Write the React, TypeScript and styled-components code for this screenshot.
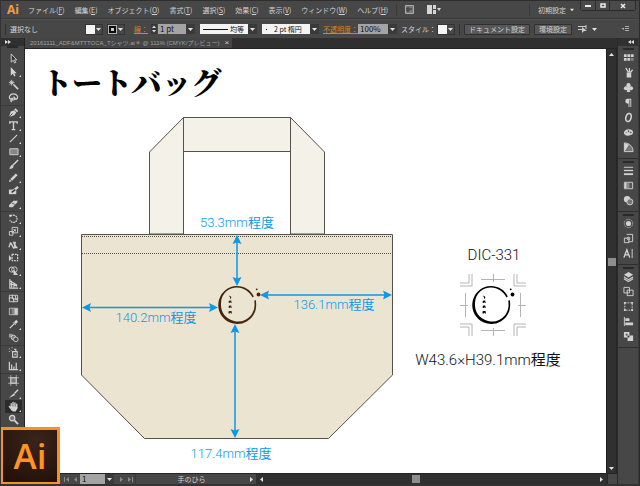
import React from "react";
import styled, { createGlobalStyle } from "styled-components";

const UI = '"Noto Sans CJK JP", "Liberation Sans", sans-serif';
const LATIN = '"Liberation Sans", "Noto Sans CJK JP", sans-serif';
const ORANGE = "#d9822b";

const Global = createGlobalStyle`
  * { box-sizing: border-box; }
  body { margin: 0; background: #474747; }
  button, input, select { font: inherit; color: inherit; margin: 0; padding: 0; border: 0; border-radius: 0; background: none; }
  svg { display: block; flex: none; }
`;

const Window = styled.div`
  height: 100vh;
  display: flex;
  flex-direction: column;
  background: #474747;
  color: #d2d2d2;
  font: 7px/10px ${UI};
  border-left: 1px solid #333;
  border-right: 1px solid #2c2c2c;
  border-bottom: 2px solid #333;
  overflow: hidden;
  position: relative;
`;

/* menu bar */
const MenuBar = styled.header`
  height: 19px;
  flex: none;
  display: flex;
  align-items: center;
  padding-left: 6px;
  border-top: 1px solid #2e2e2e;
  border-bottom: 1px solid #3a3a3a;
`;
const Brand = styled.span`
  width: 21px;
  font: bold 12px/14px "Open Sans", sans-serif;
  color: #f2a03a;
`;
const Menus = styled.nav`
  display: flex;
  gap: 10px;
`;
const MenuItem = styled.button`
  white-space: nowrap;
  u { text-underline-offset: 1px; }
`;
const Divider = styled.span`
  width: 1px;
  height: 12px;
  background: #383838;
  margin: 0 8px;
`;
const IconGap = styled.button`
  display: flex;
  margin-right: 13px;
`;
const MenuRight = styled.div`
  margin-left: auto;
  height: 100%;
  display: flex;
  align-items: center;
`;
const Workspace = styled.button`
  display: flex;
  align-items: center;
  gap: 4px;
  margin-right: 6px;
`;
const WindowButtons = styled.div`
  align-self: flex-start;
  display: flex;
  margin-right: 3px;
  border: 1px solid #2b2b2b;
  border-top: 0;
  border-radius: 0 0 3px 3px;
`;
const WindowButton = styled.button<{ $wide?: boolean }>`
  width: ${(p) => (p.$wide ? 26 : 14)}px;
  height: 9px;
  display: grid;
  place-items: center;
  background: #4a4a4a;
  & + & { border-left: 1px solid #2b2b2b; }
`;

/* control bar */
const ControlBar = styled.div`
  height: 19px;
  flex: none;
  display: flex;
  align-items: center;
  padding: 0 10px 0 4px;
  white-space: nowrap;
  border-top: 1px solid #515151;
`;
const Grip = styled.span`
  width: 1px;
  height: 11px;
  margin-right: 4px;
  background: #303030;
`;
const Status = styled.span`
  width: 75px;
`;
const Swatch = styled.button<{ $stroke?: boolean }>`
  height: 11px;
  display: flex;
  align-items: center;
  margin-right: 4px;
  border: 1px solid #343434;
  i {
    width: 9px;
    height: 9px;
    background: ${(p) => (p.$stroke ? "#ccc" : "#f6f6f6")};
    border: ${(p) => (p.$stroke ? "3px solid #0c0c0c" : "0")};
    outline: ${(p) => (p.$stroke ? "1px solid #b5b5b5" : "0")};
    outline-offset: -1px;
  }
  svg { margin: 0 1px; }
`;
const LinkLabel = styled.a<{ $before?: number }>`
  color: ${ORANGE};
  text-decoration: underline;
  text-underline-offset: 1px;
  margin-left: ${(p) => p.$before ?? 0}px;
`;
const Stepper = styled.button`
  width: 6px;
  height: 10px;
  margin: 0 1px 0 3px;
  background: #383838;
  display: grid;
  place-items: center;
`;
const Field = styled.input<{ $w: number }>`
  width: ${(p) => p.$w}px;
  height: 10px;
  padding-left: 2px;
  background: #a4a4a4;
  color: #111;
  font: 8px/10px ${UI};
`;
const DropButton = styled.button<{ $gap?: number }>`
  width: 9px;
  height: 10px;
  margin-right: ${(p) => p.$gap ?? 5}px;
  background: #3a3a3a;
  display: grid;
  place-items: center;
`;
const Preset = styled.select<{ $line?: boolean }>`
  appearance: none;
  width: 48px;
  height: 10px;
  padding-left: ${(p) => (p.$line ? 30 : 12)}px;
  color: #111;
  font: 7px/10px ${UI};
  background: ${(p) =>
    p.$line
      ? "linear-gradient(#111, #111) 3px 5px / 25px 1px no-repeat #f3f3f3"
      : "linear-gradient(#111, #111) 4px 5px / 1px 1px no-repeat #f3f3f3"};
`;
const PlainLabel = styled.span`
  margin-right: 1px;
`;
const PushButton = styled.button`
  height: 11px;
  padding: 0 4px;
  margin-right: 4px;
  line-height: 9px;
  background: #575757;
  border: 1px solid #303030;
  border-radius: 1px;
`;
const PanelToggle = styled.button`
  margin-left: auto;
`;
const IconMenu = styled.button`
  display: flex;
  align-items: center;
  gap: 5px;
  margin-left: 2px;
`;

/* main area */
const Main = styled.div`
  flex: 1;
  min-height: 0;
  display: grid;
  grid-template-columns: 24px minmax(0, 1fr) 22px;
`;
const Tools = styled.aside`
  background: #474747;
  border-right: 1px solid #232323;
  display: flex;
  flex-direction: column;
  align-items: stretch;
  overflow: hidden;
`;
const PanelHead = styled.div<{ $right?: boolean }>`
  height: 8px;
  flex: none;
  display: flex;
  align-items: center;
  justify-content: ${(p) => (p.$right ? "flex-end" : "flex-start")};
  padding: 0 4px;
  background: #303030;
`;
const PanelGrip = styled.div`
  width: 11px;
  height: 2px;
  flex: none;
  margin: 0 auto;
  background: #2a2a2a;
`;
const ToolList = styled.div`
  display: flex;
  flex-direction: column;
  padding-top: 4px;
`;
const ToolGroup = styled.div`
  padding: 0 0 1px 4px;
  & + & { border-top: 1px solid #3b3b3b; }
`;
const ToolButton = styled.button<{ $active?: boolean }>`
  width: 17px;
  height: 13px;
  display: flex;
  align-items: center;
  padding-left: 3px;
  background: ${(p) => (p.$active ? "#2b2b2b" : "none")};
`;

const Center = styled.main`
  display: flex;
  flex-direction: column;
  min-width: 0;
  min-height: 0;
`;
const Tabs = styled.div`
  height: 11px;
  flex: none;
  display: flex;
  background: #2f2f2f;
  border-bottom: 1px solid #242424;
`;
const Tab = styled.button`
  display: flex;
  align-items: center;
  gap: 5px;
  padding: 0 3px 0 5px;
  background: #454545;
  color: #a0a0a0;
  font: 6px/10px ${LATIN};
  white-space: nowrap;
`;
const TabClose = styled.span`
  font-size: 8px;
  color: #ccc;
`;
const View = styled.div`
  flex: 1;
  min-height: 0;
  display: flex;
`;
const Artboard = styled.section`
  flex: 1;
  min-width: 0;
  position: relative;
  overflow: hidden;
  background: #fff;
  color: #111;
`;
const Title = styled.h1`
  position: absolute;
  left: 17px;
  top: 13px;
  margin: 0;
  color: #000;
  font: 900 30px/38px "Noto Serif CJK JP", "Noto Sans CJK JP", serif;
  white-space: nowrap;
`;
const Drawing = styled.svg`
  font-family: Roboto, "Noto Sans CJK JP", sans-serif;
  font-weight: 300;
`;
const Unit = styled.tspan`
  font-weight: 400;
`;
const VScroll = styled.div`
  width: 11px;
  flex: none;
  display: flex;
  flex-direction: column;
  align-items: center;
  justify-content: space-between;
  padding: 3px 0 2px;
  background: #303030;
  border-left: 1px solid #1f1f1f;
  border-right: 1px solid #262626;
`;
const Thumb = styled.span`
  width: 8px;
  height: 8px;
  background: #8d8d8d;
`;
const StatusBar = styled.footer`
  height: 11px;
  flex: none;
  display: flex;
  align-items: center;
  padding-left: 37px;
  border-top: 1px solid #242424;
`;
const NavButton = styled.button`
  width: 9px;
  height: 9px;
  display: grid;
  place-items: center;
`;
const ToolName = styled.span`
  flex: 1;
  text-align: center;
  border-left: 1px solid #393939;
`;
const StatusLeft = styled.div`
  width: 194px;
  height: 100%;
  display: flex;
  align-items: center;
`;
const HScroll = styled.div`
  flex: 1;
  height: 100%;
  display: flex;
  align-items: center;
  padding: 0 3px;
  background: #303030;
`;
const HRail = styled.div`
  flex: 1;
  padding-left: 43%;
  display: flex;
`;
const Corner = styled.span`
  width: 10px;
  height: 100%;
  background: #484848;
  border-left: 1px solid #262626;
`;

const Dock = styled.aside`
  background: #474747;
  border-left: 1px solid #2a2a2a;
  border-right: 1px solid #383838;
`;
const DockGroup = styled.div`
  display: flex;
  flex-direction: column;
  align-items: center;
  padding: 2px 0 3px;
  border-bottom: 1px solid #2e2e2e;
`;
const DockButton = styled.button`
  width: 20px;
  height: 15px;
  display: grid;
  place-items: center;
`;

const AppBadge = styled.div`
  position: absolute;
  left: -1px;
  bottom: -1px;
  width: 60px;
  height: 58px;
  display: grid;
  place-items: center;
  border: 3px solid #f7921e;
  background: radial-gradient(circle at 60% 20%, #3a241a, #200f08);
  color: #ff9420;
  font: 600 35px/42px "Open Sans", "Noto Sans", sans-serif;
`;

/* small triangles used by drop-downs and scroll bars */
const arrows = {
  down: "M0 1h5L2.5 4z",
  up: "M0 4h5L2.5 1z",
  left: "M4 0v5L1 2.5z",
  right: "M1 0v5L4 2.5z",
  first: "M5 0v5L2 2.500zM0 0h1v5H0z",
  last: "M0 0v5l3-2.500zM4 0h1v5H4z",
};
const Arrow = ({ dir, fill = "#e4e4e4", size = 5 }: { dir: keyof typeof arrows; fill?: string; size?: number }) => (
  <svg width={size} height={size} viewBox="0 0 5 5" fill={fill} aria-hidden="true">
    <path d={arrows[dir]} />
  </svg>
);

const F = { fill: "currentColor", stroke: "none" };
const Icon = ({ children, size = 11 }: { children: React.ReactNode; size?: number }) => (
  <svg width={size} height={size} viewBox="0 0 12 12" fill="none" stroke="currentColor" strokeWidth="1" aria-hidden="true">
    {children}
  </svg>
);

type Tool = { name: string; art: React.ReactNode; more?: boolean; active?: boolean };
const toolGroups: Tool[][] = [
  [
    { name: "選択ツール", art: <path d="M3.500 1v9l2.200-2 1.500 3 1.300-.7-1.500-2.800h2.500z" fill="#333" /> },
    { name: "ダイレクト選択ツール", more: true, art: <path d="M3 1v9.500l2.300-2 1.500 3 1.500-.8-1.500-2.800h2.700z" {...F} /> },
    { name: "自動選択ツール", art: <><path d="M6 6l5 5" strokeWidth="1.800" /><path d="M4 1v6M1 4h6M2 2l4 4M6 2L2 6" /></> },
    { name: "なげなわツール", art: <><path d="M3 8C0 6 2 2 6 2s6 4 3 6M3 8c1 2 3 0 2-1s-3 2-1 4" strokeWidth="1.300" /><path d="M6 4v6l1.500-1.500H10z" {...F} /></> },
  ],
  [
    { name: "ペンツール", more: true, art: <><path d="M1 11l2-6 4-1.500L9 6 7 9z" {...F} /><path d="M7.500 2l3 3" strokeWidth="2" /><path d="M1 11l4-4" stroke="#444" /></> },
    { name: "文字ツール", more: true, art: <path d="M2 4V2h8v2M6 2v8M4 10.500h4" strokeWidth="1.500" /> },
    { name: "直線ツール", more: true, art: <path d="M2 10l8-8" strokeWidth="1.200" /> },
    { name: "長方形ツール", more: true, art: <path d="M2 3h9v6.500H2z" fill="#858585" /> },
    { name: "ブラシツール", art: <><path d="M5 7l6-6" strokeWidth="1.600" /><path d="M1 10c2 0 1-3 3.500-3.500L6 8c0 3-3 3-5 2z" {...F} /></> },
    { name: "鉛筆ツール", more: true, art: <><path d="M3.500 8.500l6-6" strokeWidth="2.800" /><path d="M1 11l1-3 2 2z" {...F} /></> },
    { name: "塗りブラシツール", art: <><path d="M1 5h8v5H1z" {...F} /><path d="M5 7l6-5" strokeWidth="2.500" /><path d="M4 8l4-3" stroke="#333" strokeWidth="1.500" /></> },
    { name: "消しゴムツール", more: true, art: <><path d="M1 8l5-5h4.500l-.5 2-5 5H1.500z" {...F} /><path d="M4 5.500L7.500 7" stroke="#555" /></> },
  ],
  [
    { name: "回転ツール", more: true, art: <><path d="M3 3.500a4 4 0 1 1-1 4" strokeDasharray="2 .7" strokeWidth="1.300" /><path d="M1 2l4 0-3 3z" {...F} /></> },
    { name: "拡大・縮小ツール", more: true, art: <><path d="M4.500 1.500h6v6h-6zM1.500 6h4v4h-4z" /><path d="M5 7l3-3M6 4h2v2" /></> },
    { name: "線幅ツール", more: true, art: <><path d="M1 9c2-6 2-6 4-1s2 0 3-5M2 4l2 2M6 3l1 3" strokeWidth="1.400" /><path d="M7 5l4 5H7z" {...F} /></> },
    { name: "自由変形ツール", art: <><path d="M1 3v7l3-3z" {...F} /><path d="M4.500 2.500h6v7h-6z" strokeDasharray="2 1" strokeWidth="1.300" /></> },
    { name: "シェイプ形成ツール", more: true, art: <><circle cx="4" cy="5" r="2.800" /><circle cx="7" cy="5" r="3" /><path d="M6 5l5 6H6z" {...F} /></> },
    { name: "遠近グリッドツール", more: true, art: <path d="M2 1v10h9M4 3v7M6.500 5v5M2 3l8 5M2 6l8 3" strokeWidth="1.200" /> },
  ],
  [
    { name: "メッシュツール", art: <><path d="M1.500 2.500h9v7h-9z" /><path d="M1 6c3-3 6 3 10 0M5 2c-2 3 3 5 1 8M8 3l1 5" strokeWidth="1.200" /></> },
    { name: "グラデーションツール", art: <><path d="M1.500 2.500h9v7h-9z" /><path d="M2 3h2v6H2z" fill="#555" stroke="none" /><path d="M4 3h3v6H4z" fill="#888" stroke="none" /><path d="M7 3h3v6H7z" {...F} /></> },
    { name: "スポイトツール", more: true, art: <><path d="M2 10l5-5" strokeWidth="1.400" /><path d="M7.500 4.500L10 2" strokeWidth="3" /><path d="M5.500 3.500l3 3" /></> },
    { name: "ブレンドツール", art: <><path d="M1 2h4v4H1z" {...F} opacity=".6" /><circle cx="6" cy="6" r="2.500" fill="#777" /><circle cx="8.500" cy="8" r="2.500" fill="#444" /></> },
  ],
  [
    { name: "シンボルスプレーツール", more: true, art: <><path d="M5 5h5v6H5zM6.500 2.500h2V5" strokeWidth="1.200" /><path d="M7 7h1.500v2H7z" {...F} /><path d="M1 2h1M3 4h1M1 5h1M4 1h1" /></> },
    { name: "棒グラフツール", more: true, art: <path d="M1.500 2v8.500h9.500M4 5v5M6.500 7v3M9 3v7" strokeWidth="1.300" /> },
  ],
  [
    { name: "アートボードツール", art: <><path d="M3 3h6v6H3z" fill="#777" /><path d="M3 0v12M9 0v12M0 3h12M0 9h12" strokeWidth=".7" /></> },
    { name: "スライスツール", more: true, art: <><path d="M1 11l5-5 2 1.500z" {...F} /><path d="M7 6l4-4" strokeWidth="1.600" /></> },
    { name: "手のひらツール", more: true, active: true, art: <><path d="M3.500 7V3M5.500 6V1.500M7.500 6V2M9.500 7V3.500M1.500 6l3 4" strokeWidth="1.500" strokeLinecap="round" /><path d="M3 6h7.200v2L8.500 11.500H5z" {...F} /></> },
    { name: "ズームツール", art: <><circle cx="4.500" cy="4.500" r="2.900" fill="#777" strokeWidth="1.300" /><path d="M7 7l4 4" strokeWidth="2" /></> },
  ],
];

const dockGroups: Tool[][] = [
  [
    { name: "スウォッチ", art: <><path d="M1 2.500h3v3H1zM4.800 2.500h3v3h-3zM8.600 2.500h3v3h-3zM1 6.500h3v3H1zM4.800 6.500h3v3h-3z" {...F} /><path d="M8.600 6.500h3v3h-3z" fill="#888" stroke="none" /></> },
    { name: "ブラシ", art: <><path d="M4 6h5v5.500H4z" {...F} /><path d="M6 6L3 1M7 6V1M8 6l2.500-3" strokeWidth="1.400" /></> },
    { name: "シンボル", art: <><circle cx="6" cy="3.500" r="2.300" {...F} /><circle cx="3.300" cy="6.800" r="2.300" {...F} /><circle cx="8.700" cy="6.800" r="2.300" {...F} /><path d="M5.500 5h1l1.500 6H4z" {...F} /></> },
    { name: "段落", art: <><path d="M9 2H5a2.500 2.500 0 0 0 0 5h1v4h1V3h1v8h1z" {...F} /></> },
    { name: "OpenType", art: <ellipse cx="6" cy="6" rx="2.800" ry="4.500" strokeWidth="1.700" transform="rotate(15 6 6)" /> },
    { name: "カラー", art: <><path d="M6 2.500c-3 0-5 2-5 4s3 3.500 5 3 5-1 5-3.500-2-3.500-5-3.500z" {...F} /><circle cx="3.500" cy="6" r=".9" fill="#444" /><circle cx="6" cy="4.500" r=".5" fill="#444" stroke="#444" /><circle cx="8.500" cy="6" r=".5" stroke="#444" /></> },
    { name: "カラーガイド", art: <><path d="M1.500 1v9.500H11C11 5 7 1 1.500 1z" fill="#777" /><path d="M1.500 1v9.500l5-7.500z" {...F} /></> },
  ],
  [
    { name: "線", art: <><path d="M1 2.500h10" /><path d="M1 6h10" strokeWidth="1.500" /><path d="M1 10h10" strokeWidth="2" /></> },
    { name: "グラデーション", art: <><path d="M1.500 2.500h9v7h-9z" fill="#555" /><path d="M2 3h2v6H2z" {...F} /><path d="M4 3h3v6H4z" fill="#8d8d8d" stroke="none" /></> },
    { name: "透明", art: <><circle cx="4.500" cy="4.500" r="3.500" {...F} /><circle cx="7.500" cy="7.500" r="3.300" fill="#777" /></> },
  ],
  [
    { name: "アピアランス", art: <><circle cx="6" cy="6" r="2.800" {...F} /><circle cx="6" cy="6" r="4.600" strokeDasharray="1 1" /></> },
    { name: "グラフィックスタイル", art: <><path d="M4 1.500h6.500v8H6" /><path d="M1.500 5.500h5v5h-5z" /><circle cx="6" cy="6" r="1.500" /></> },
    { name: "文字", art: <><path d="M1 10.500L4.200 2l3.200 8.500M2.500 7.500h3.500" strokeWidth="1.500" /><path d="M10 1v10" /></> },
  ],
  [
    { name: "レイヤー", art: <><path d="M6 1l5 3-5 3-5-3z" {...F} /><path d="M1 6.500l5 3 5-3M1 8.500l5 3 5-3" strokeWidth="1.200" /></> },
    { name: "アートボード", art: <path d="M1 1.500h6v6H1zM4.500 4.500h6.500v6H4.500z" fill="#474747" /> },
    { name: "変形", art: <><path d="M2 2h8v8H2z" strokeDasharray="2 1" /><path d="M1 1h2v2H1zM9 1h2v2H9zM1 9h2v2H1zM9 9h2v2H9z" {...F} /></> },
    { name: "整列", art: <><path d="M1.500 1v10" /><path d="M2.500 2.500H7v3H2.500zM2.500 7H11v3H2.500z" {...F} /></> },
    { name: "パスファインダー", art: <><path d="M1 1h6v6H1zM5 5h6v6H5z" {...F} /><path d="M5 5h2v2H5z" fill="#333" stroke="none" /><path d="M3 3h2v2H3z" fill="#555" stroke="none" /></> },
  ],
];

const menus = [
  ["ファイル", "F"], ["編集", "E"], ["オブジェクト", "O"], ["書式", "T"], ["選択", "S"],
  ["効果", "C"], ["表示", "V"], ["ウィンドウ", "W"], ["ヘルプ", "H"],
];

/* brush-ring emblem centred on its own origin */
const Emblem = ({ x, y, color }: { x: number; y: number; color: string }) => (
  <g transform={`translate(${x} ${y})`} fill={color}>
    <path d="M16.800-8.500C13.500-15.500 7-19 0-19A19 19 0 1 0 18.300 6C19.400 2 19.400-1 18.800-5L17.300-4.200C17.800 0 17.600 3 16.400 6A16.500 16.500 0 0 1-3 16C-13 13-16.500 6-16-2C-15.500-12-8-17.300 0-17.400C7-17.200 12-13.500 15.600-7.500z" />
    <circle cx="21.500" cy="-10.500" r="1.900" />
    <circle cx="19.700" cy="-15.700" r=".9" />
    <path d="M-8-9.500l2 1 .3 1.500-1.300 1v-1.500z" />
    <path d="M-8.300-2v-2l1-.5h1.500l.5 2.500h-1l-.5-1-.5 1zM-8.300 3v-2l1-.5h1.500l.5 2.500h-1l-.5-1-.5 1zM-8.500 8.500v-2l1-.5h2l.5 2.500h-1l-.5-1-.8 1z" />
  </g>
);

const Head = ({ x, y, turn }: { x: number; y: number; turn: number }) => (
  <path d="M0 0L-4.500 9 0 7.500 4.500 9z" transform={`translate(${x} ${y}) rotate(${turn})`} fill="#0b98ea" />
);

const TrimCorner = ({ turn }: { turn?: string }) => (
  <path d="M-24-31v9h-9M-21-31v12h-12" transform={turn} />
);

const Measure = ({ x, y, value }: { x: number; y: number; value: string }) => (
  <text x={x} y={y}>{value}<Unit>程度</Unit></text>
);

const ToteDrawing = () => (
  <Drawing width="582" height="425" viewBox="25 49 582 425" role="img" aria-label="トートバッグ 寸法図">
    <g stroke="#55524c" strokeWidth="1">
      <path d="M149.500 234V152L183.500 117.500H290.500L324.500 152V234H290.500V151.500H183.500V234z" fill="#f4f1e9" />
      <path d="M183.500 117.500V152M290.500 117.500V152" />
      <path d="M81.500 234.500H392.500V375L328.500 438.500H144.500L81.500 375z" fill="#ebe4d1" />
      <path d="M82 236.500H392M82 253.500H392" strokeDasharray="1 1" />
    </g>
    <g stroke="#0b98ea" strokeWidth="1.500">
      <path d="M237 240V280M235 330V432M88 307.500H212M267 295H386" />
    </g>
    <Head x={237} y={235} turn={0} />
    <Head x={237} y={286} turn={180} />
    <Head x={235} y={324} turn={0} />
    <Head x={235} y={438} turn={180} />
    <Head x={82} y={307.5} turn={-90} />
    <Head x={218} y={307.5} turn={90} />
    <Head x={260} y={295} turn={-90} />
    <Head x={392} y={295} turn={90} />
    <Emblem x={237} y={305} color="#42240f" />
    <g fill="#0b98ea" fontSize="13" textAnchor="middle">
      <Measure x={237} y={227} value="53.3mm" />
      <Measure x={156} y={322} value="140.2mm" />
      <Measure x={334} y={309} value="136.1mm" />
      <Measure x={231} y={458} value="117.4mm" />
    </g>
    <g stroke="#b4b4b4" fill="none" transform="translate(493 305)">
      <TrimCorner />
      <TrimCorner turn="scale(-1 1)" />
      <TrimCorner turn="scale(1 -1)" />
      <TrimCorner turn="scale(-1 -1)" />
      <path d="M-12-25.500H12M.5-31v8M-12 25.500H12M.5 23v8M-27.500-12V12M-33 .5h8M27.500-12V12M25 .5h8" />
    </g>
    <Emblem x={491} y={305} color="#000" />
    <g fill="#111" fontSize="15" textAnchor="middle">
      <text x="494" y="260">DIC-331</text>
      <Measure x={488} y={365} value="W43.6×H39.1mm" />
    </g>
  </Drawing>
);

export default function App() {
  return (
    <Window lang="ja">
      <Global />
      <MenuBar>
        <Brand>Ai</Brand>
        <Menus>
          {menus.map(([label, key]) => (
            <MenuItem key={label}>
              {label}(<u>{key}</u>)
            </MenuItem>
          ))}
        </Menus>
        <Divider />
        <IconGap aria-label="Bridge">
          <svg width="9" height="9" viewBox="0 0 9 9"><path d="M.5.5h8v8h-8z" fill="#777" stroke="#aaa" /><path d="M2 3h2v3H2zM5 4h2" stroke="#333" fill="none" /></svg>
        </IconGap>
        <IconGap aria-label="ドキュメントの配置">
          <svg width="14" height="9" viewBox="0 0 14 9" fill="#d5d5d5"><path d="M0 0h5v9H0zM6 0h3v4H6zM6 5h3v4H6zM10 3h4l-2 3z" /></svg>
        </IconGap>
        <MenuRight>
          <Divider />
          <Workspace>初期設定 <Arrow dir="down" size={4} /></Workspace>
          <WindowButtons>
            <WindowButton aria-label="最小化"><svg width="6" height="2"><path d="M0 0h6v2H0z" fill="#eee" /></svg></WindowButton>
            <WindowButton aria-label="最大化"><svg width="6" height="5"><path d="M1 1h4v3H1z" fill="none" stroke="#eee" strokeWidth="1.500" /></svg></WindowButton>
            <WindowButton aria-label="閉じる" $wide><svg width="6" height="6"><path d="M1 1l4 4M5 1L1 5" stroke="#eee" strokeWidth="1.500" /></svg></WindowButton>
          </WindowButtons>
        </MenuRight>
      </MenuBar>

      <ControlBar>
        <Grip />
        <Status>選択なし</Status>
        <Swatch aria-label="塗り"><i /><Arrow dir="down" /></Swatch>
        <Swatch aria-label="線のカラー" $stroke><i /><Arrow dir="down" /></Swatch>
        <LinkLabel href="#stroke" $before={5}>線：</LinkLabel>
        <Stepper aria-label="線幅の増減"><svg width="4" height="8" viewBox="0 0 4 8" fill="#ddd"><path d="M0 3l2-2.500L4 3zM0 5l2 2.500L4 5z" /></svg></Stepper>
        <Field $w={28} aria-label="線幅" defaultValue="1 pt" />
        <DropButton aria-label="線幅の一覧"><Arrow dir="down" /></DropButton>
        <Preset $line aria-label="可変線幅プロファイル"><option>均等</option></Preset>
        <DropButton aria-label="プロファイルの一覧"><Arrow dir="down" /></DropButton>
        <Preset aria-label="ブラシ定義"><option>2 pt 楕円</option></Preset>
        <DropButton aria-label="ブラシの一覧" $gap={4}><Arrow dir="down" /></DropButton>
        <LinkLabel href="#opacity">不透明度：</LinkLabel>
        <Field $w={30} aria-label="不透明度" defaultValue="100%" />
        <DropButton aria-label="不透明度の一覧" $gap={4}><Arrow dir="down" /></DropButton>
        <PlainLabel>スタイル：</PlainLabel>
        <Swatch aria-label="スタイル"><i /><Arrow dir="down" /></Swatch>
        <Grip />
        <PushButton>ドキュメント設定</PushButton>
        <PushButton>環境設定</PushButton>
        <IconMenu aria-label="選択オプション">
          <svg width="9" height="8" viewBox="0 0 9 8" fill="none" stroke="#ccc"><path d="M0 1.500h8M0 4.500h4M8 0v4" /><path d="M4 2v6l2-2h3z" fill="#ccc" stroke="none" /></svg>
          <Arrow dir="down" />
        </IconMenu>
        <PanelToggle aria-label="パネルメニュー">
          <svg width="8" height="6" viewBox="0 0 8 6" fill="none" stroke="#aaa"><path d="M4 .5h4M4 2.500h4M4 4.500h4" /><path d="M0 2h3v2z" fill="#aaa" stroke="none" /></svg>
        </PanelToggle>
      </ControlBar>

      <Main>
        <Tools aria-label="ツール">
          <PanelHead><svg width="6" height="4" viewBox="0 0 6 4" fill="#ddd"><path d="M0 0l3 2-3 2zM3 0l3 2-3 2z" /></svg></PanelHead>
          <PanelGrip />
          <ToolList>
            {toolGroups.map((group, i) => (
              <ToolGroup key={i}>
                {group.map((t) => (
                  <ToolButton key={t.name} aria-label={t.name} $active={t.active}>
                    <Icon>{t.art}</Icon>
                    {t.more && <svg width="2" height="10" viewBox="0 0 2 10"><path d="M0 10l2-2v2z" fill="#ddd" /></svg>}
                  </ToolButton>
                ))}
              </ToolGroup>
            ))}
          </ToolList>
        </Tools>

        <Center>
          <Tabs>
            <Tab>20161111_ADF&amp;MTTTOCA_Tシャツ.ai＊ @ 111% (CMYK/プレビュー)<TabClose>×</TabClose></Tab>
          </Tabs>
          <View>
            <Artboard>
              <Title>トートバッグ</Title>
              <ToteDrawing />
            </Artboard>
            <VScroll>
              <Arrow dir="up" />
              <Thumb />
              <Arrow dir="down" />
            </VScroll>
          </View>
          <StatusBar>
            <StatusLeft>
              <NavButton aria-label="最初"><Arrow dir="first" fill="#888" /></NavButton>
              <NavButton aria-label="前へ"><Arrow dir="left" fill="#888" /></NavButton>
              <Field $w={25} aria-label="アートボード" defaultValue="1" />
              <DropButton aria-label="アートボードの一覧" $gap={3}><Arrow dir="down" /></DropButton>
              <NavButton aria-label="次へ"><Arrow dir="right" fill="#888" /></NavButton>
              <NavButton aria-label="最後"><Arrow dir="last" fill="#888" /></NavButton>
              <ToolName>手のひら</ToolName>
              <NavButton aria-label="表示"><Arrow dir="right" /></NavButton>
            </StatusLeft>
            <HScroll>
              <Arrow dir="left" />
              <HRail><Thumb /></HRail>
              <Arrow dir="right" />
            </HScroll>
            <Corner />
          </StatusBar>
        </Center>

        <Dock aria-label="パネル">
          <PanelHead $right><svg width="6" height="4" viewBox="0 0 6 4" fill="#ddd"><path d="M3 0L0 2l3 2zM6 0L3 2l3 2z" /></svg></PanelHead>
          {dockGroups.map((group, i) => (
            <DockGroup key={i}>
              <PanelGrip />
              {group.map((t) => (
                <DockButton key={t.name} aria-label={t.name}>
                  <Icon>{t.art}</Icon>
                </DockButton>
              ))}
            </DockGroup>
          ))}
        </Dock>
      </Main>
      <AppBadge>Ai</AppBadge>
    </Window>
  );
}
